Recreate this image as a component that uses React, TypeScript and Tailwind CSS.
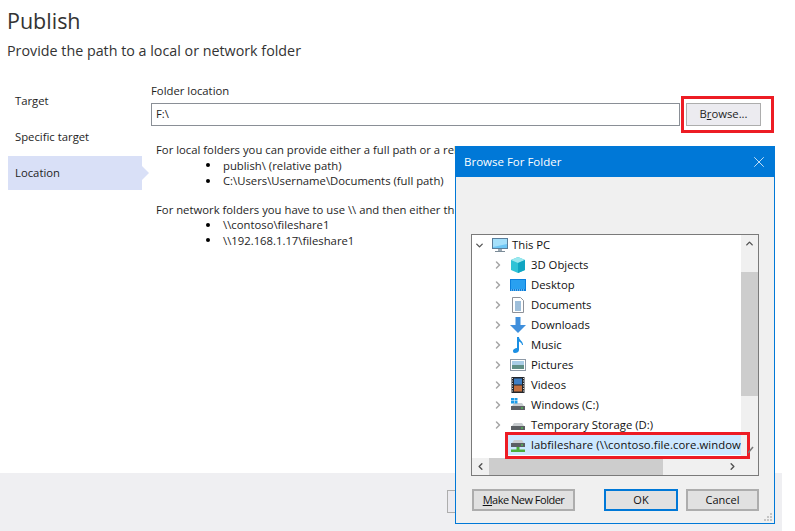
import { ChevronDown, ChevronLeft, ChevronRight, ChevronUp, X } from "lucide-react";
import type { ReactNode } from "react";

const font = { fontFamily: '"Open Sans", "Noto Sans", sans-serif' };

function Svg({ children }: { children: ReactNode }) {
  return (
    <svg width="16" height="16" viewBox="0 0 16 16" className="shrink-0">
      {children}
    </svg>
  );
}

const PcIcon = () => (
  <Svg>
    <rect x="0.5" y="1.5" width="15" height="10" fill="#6ec6f5" stroke="#5a7d9a" />
    <path d="M1 2h14v5L1 10z" fill="#a5e0fb" />
    <path d="M6 12h4v2H6z" fill="#9aa8b3" />
    <path d="M3 14.5h10" stroke="#7b8b97" />
  </Svg>
);
const CubeIcon = () => (
  <Svg>
    <path d="M8 0l7 3v10l-7 3-7-3V3z" fill="#2fc3d6" />
    <path d="M8 0l7 3-7 3-7-3z" fill="#9be8ee" />
    <path d="M8 6l7-3v10l-7 3z" fill="#10a5c2" />
  </Svg>
);
const DesktopIcon = () => (
  <Svg>
    <rect x="0" y="2" width="16" height="12" fill="#0b7fdc" />
    <rect x="1" y="3" width="14" height="9" fill="#29a0f0" />
    <path d="M1 13h14" stroke="#bfe3fa" strokeDasharray="1 1" />
  </Svg>
);
const DocIcon = () => (
  <Svg>
    <path d="M2.5.5h8l3 3v12h-11z" fill="#fff" stroke="#8d9199" />
    <path d="M5 5h6M5 7h6M5 9h6M5 11h6M5 13h6" stroke="#3f7fb5" />
  </Svg>
);
const DownIcon = () => (
  <Svg>
    <path d="M5.5 0h5v8H16l-8 8-8-8h5.500z" fill="#3f8fdc" />
  </Svg>
);
const MusicIcon = () => (
  <Svg>
    <path d="M7 0h2c0 3 4 4 4 8h-1c0-2-2-3-3-3.500V13c0 2-2 3-4 3s-2-1.500-2-2.500S5 11 7 11z" fill="#1b8fe3" />
  </Svg>
);
const PicIcon = () => (
  <Svg>
    <rect x="0.500" y="2.500" width="15" height="11" fill="#fff" stroke="#8d99a6" />
    <rect x="2" y="4" width="12" height="4" fill="#a9cde6" />
    <rect x="2" y="8" width="12" height="4" fill="#5f8f85" />
  </Svg>
);
const VideoIcon = () => (
  <Svg>
    <rect x="1.500" y="0" width="13" height="16" fill="#23262b" />
    <rect x="4" y="1.500" width="8" height="6" fill="#3f7fc4" />
    <rect x="4" y="8.500" width="8" height="6" fill="#c4703f" />
    <path d="M2.500 1v14M13.500 1v14" stroke="#d9d9d9" strokeDasharray="1 1.500" />
  </Svg>
);
const DriveBody = () => (
  <>
    <path d="M2 9l2-3h8l2 3z" fill="#c9cdd0" />
    <rect x="1" y="9" width="14" height="4" fill="#5b5f63" />
    <rect x="11" y="10.500" width="2" height="1" fill="#4fe04f" />
  </>
);
const WinDriveIcon = () => (
  <Svg>
    <DriveBody />
    <path d="M1 1h3v2.500H1zM4.500 1h3v2.500h-3zM1 4h3v2.500H1zM4.500 4h3v2.500h-3z" fill="#1b9be8" />
  </Svg>
);
const DriveIcon = () => (
  <Svg>
    <DriveBody />
  </Svg>
);
const ShareIcon = () => (
  <Svg>
    <path d="M2 6l2-3h8l2 3z" fill="#c9cdd0" />
    <rect x="1" y="6" width="14" height="4" fill="#5b5f63" />
    <rect x="11" y="7.500" width="2" height="1" fill="#4fe04f" />
    <path d="M6.500 10h3v2.500H15V15H1v-2.500h5.500z" fill="#4caf3c" />
  </Svg>
);

const rows: { label: string; icon: ReactNode }[] = [
  { label: "3D Objects", icon: <CubeIcon /> },
  { label: "Desktop", icon: <DesktopIcon /> },
  { label: "Documents", icon: <DocIcon /> },
  { label: "Downloads", icon: <DownIcon /> },
  { label: "Music", icon: <MusicIcon /> },
  { label: "Pictures", icon: <PicIcon /> },
  { label: "Videos", icon: <VideoIcon /> },
  { label: "Windows (C:)", icon: <WinDriveIcon /> },
  { label: "Temporary Storage (D:)", icon: <DriveIcon /> },
];

function Bullet({ children }: { children: ReactNode }) {
  return (
    <li className="flex items-center">
      <span className="mr-[13px] h-[4px] w-[4px] rounded-full bg-black" />
      {children}
    </li>
  );
}

function FolderDialog() {
  return (
    <div className="absolute left-[455px] top-[146px] flex h-[378px] w-[320px] flex-col border border-[#0078d7] bg-[#f0f0f0]">
      <div className="flex h-[30px] items-center justify-between bg-[#0078d7] pl-2 pr-[6px] text-[11.5px] text-white">
        <span>Browse For Folder</span>
        <X className="h-[18px] w-[18px]" strokeWidth={1} />
      </div>

      <div className="ml-[15px] mt-[57px] flex h-[242px] w-[288px] flex-col border border-[#7a7a7a] bg-white">
        <div className="flex min-h-0 flex-1">
          <div className="min-w-0 flex-1 overflow-hidden text-[11.3px] text-[#111]">
            <div className="flex h-5 items-center whitespace-nowrap pl-[2px]">
              <ChevronDown className="mr-[7px] h-[11px] w-[11px] text-[#555]" strokeWidth={3} />
              <PcIcon />
              <span className="ml-[4px]">This PC</span>
            </div>
            {rows.map((r) => (
              <div key={r.label} className="flex h-5 items-center whitespace-nowrap pl-[20px]">
                <ChevronRight className="mr-[6px] h-[12px] w-[12px] text-[#a6a6a6]" strokeWidth={3} />
                {r.icon}
                <span className="ml-[5px]">{r.label}</span>
              </div>
            ))}
            <div className="ml-[36px] flex h-[20px] w-[233px] items-center whitespace-nowrap bg-[#cce8ff] pl-[2px]">
              <ShareIcon />
              <span className="ml-[5px] tracking-[0.07px]">labfileshare (\\contoso.file.core.window</span>
            </div>
          </div>
          <div className="flex w-[17px] shrink-0 flex-col bg-[#f0f0f0]">
            <div className="flex h-[17px] items-center justify-center">
              <ChevronUp className="h-[11px] w-[11px] text-[#505050]" strokeWidth={3} />
            </div>
            <div className="mt-[20px] h-[124px] bg-[#cdcdcd]" />
          </div>
        </div>
        <div className="flex h-[17px] shrink-0 items-center bg-[#cdcdcd]">
          <div className="flex h-full w-[17px] items-center justify-center bg-[#f0f0f0]">
            <ChevronLeft className="h-[11px] w-[11px] text-[#505050]" strokeWidth={3} />
          </div>
          <div className="flex-1" />
          <div className="flex h-full w-[95px] items-center justify-end bg-[#f0f0f0] pr-[20px]">
            <ChevronRight className="h-[11px] w-[11px] text-[#505050]" strokeWidth={3} />
          </div>
        </div>
      </div>

      <div className="ml-[16px] mt-[13px] flex text-[11px] text-[#111]">
        <button className="h-[22px] w-[103px] border-2 border-[#adadad] bg-[#e1e1e1] tracking-[-0.5px]">
          <span className="underline">M</span>ake New Folder
        </button>
        <button className="ml-[29px] h-[22px] w-[74px] border-[2px] border-[#0078d7] bg-[#e1e1e1]">OK</button>
        <button className="ml-[8px] h-[22px] w-[73px] border-2 border-[#adadad] bg-[#e1e1e1]">Cancel</button>
      </div>

      {/* resize grip */}
      <svg width="10" height="10" viewBox="0 0 10 10" className="absolute bottom-[1px] right-[1px]">
        <path d="M7 1h2v2H7zM4 4h2v2H4zM7 4h2v2H7zM1 7h2v2H1zM4 7h2v2H4zM7 7h2v2H7z" fill="#c4c4c4" />
      </svg>

      {/* red highlight round the share */}
      <div className="absolute left-[49px] top-[285px] h-[27px] w-[245px] border-[3px] border-[#ed1c24]" />
      <svg width="6" height="8" viewBox="0 0 6 8" className="absolute left-[292px] top-[299px]">
        <path d="M0 7L5 1" stroke="#777" strokeWidth="1.500" />
      </svg>
    </div>
  );
}

export default function App() {
  return (
    <div className="relative flex h-[531px] w-[782px] flex-col overflow-hidden bg-white text-[11.3px] text-[#1e1e1e]" style={font}>
      <div className="flex-1 pl-[7px]">
        <h1 className="mt-[5px] text-[21.5px] leading-[32px] text-[#333]">Publish</h1>
        <p className="mt-[3px] text-[14.3px] leading-[22px] text-[#333]">Provide the path to a local or network folder</p>

        <div className="mt-[21px] flex">
          <nav className="w-[144px] shrink-0 pl-px">
            <div className="flex h-[36px] items-center pl-[7px]">Target</div>
            <div className="flex h-[36px] items-center pl-[7px]">Specific target</div>
            <div className="relative mt-px flex h-[34px] w-[134px] items-center bg-[#d9e0f7] pl-[7px] pt-px">
              Location
              <div className="absolute left-full top-[10px] h-0 w-0 border-y-[7px] border-l-[7px] border-y-transparent border-l-[#d9e0f7]" />
            </div>
          </nav>

          <div className="flex-1">
            <div className="leading-[16px]">Folder location</div>
            <div className="mt-[4px] flex">
              <div className="flex h-[23px] w-[529px] items-center border border-[#8a8f96] bg-white pl-[4px]">F:\</div>
              <div className="-my-[7px] ml-px flex h-[37px] w-[93px] items-center border-[3px] border-[#ed1c24] pl-[2px]">
                <button className="h-[23px] w-[75px] border border-[#adadad] bg-[#ecebf0]">
                  B<span className="underline">r</span>owse...
                </button>
              </div>
            </div>
            <div className="ml-[5px] mt-[16px] whitespace-nowrap leading-[15.500px]">
              <p>For local folders you can provide either a full path or a rel</p>
              <ul className="ml-[51px] -translate-x-px">
                <Bullet>publish\ (relative path)</Bullet>
                <Bullet>C:\Users\Username\Documents (full path)</Bullet>
              </ul>
              <p className="mt-[13px]">For network folders you have to use \\ and then either th</p>
              <ul className="ml-[50px]">
                <Bullet>\\contoso\fileshare1</Bullet>
                <Bullet>\\192.168.1.17\fileshare1</Bullet>
              </ul>
            </div>
          </div>
        </div>
      </div>

      <div className="flex h-[58px] shrink-0 bg-[#efeff2] pl-[447px] pt-[17px]">
        <div className="h-[23px] w-[40px] border border-[#adadad] bg-[#ecebf0]" />
      </div>

      <FolderDialog />
    </div>
  );
}
